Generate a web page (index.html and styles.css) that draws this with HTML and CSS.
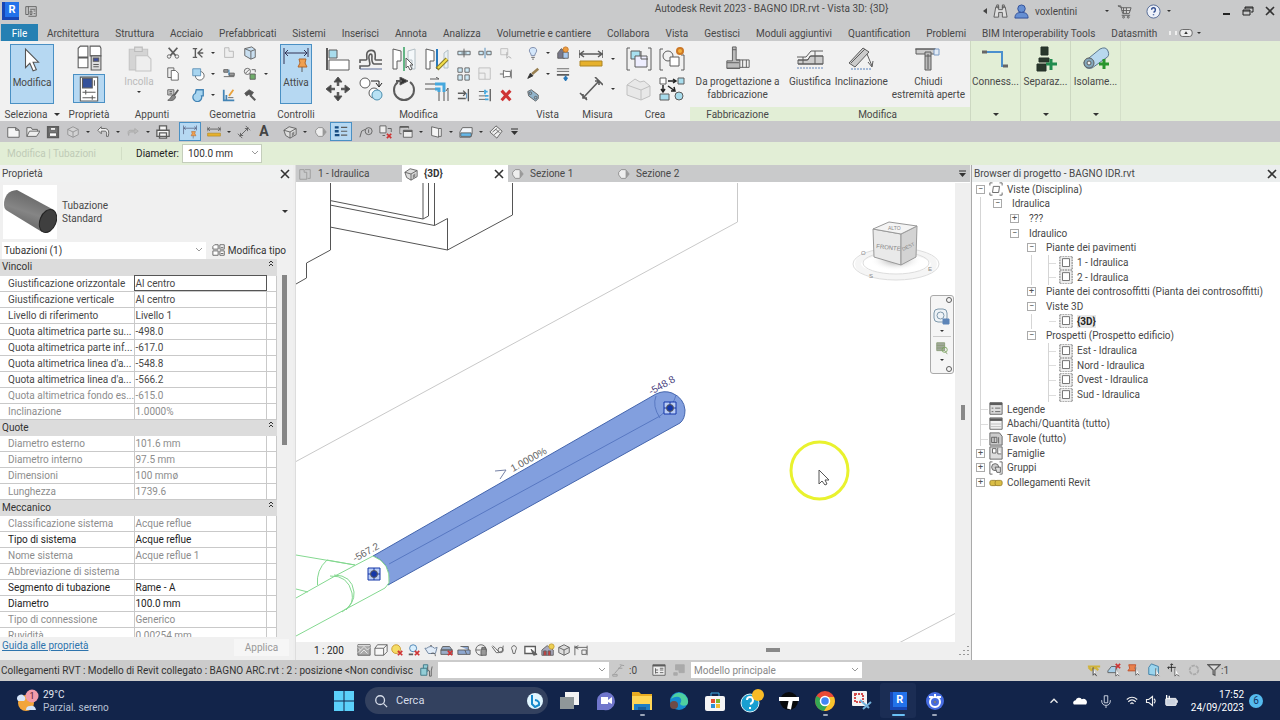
FILE: index.html
```
<!DOCTYPE html>
<html lang="it">
<head>
<meta charset="utf-8">
<title>Autodesk Revit 2023 - BAGNO IDR.rvt</title>
<link rel="stylesheet" href="styles.css">
</head>
<body>
<svg class="sprite" aria-hidden="true">
  <symbol id="home" viewBox="0 0 16 16"><path d="M2 3h12v11H5M2 3v9h3V3M7 6h6M7 8v4h2V8zM11 8h2M11 11h2"/></symbol>
  <symbol id="arrow" viewBox="0 0 16 24"><path d="M2 2v17l4-4 3 7 3-1-3-7h5z" fill="#fff" stroke="#555"/></symbol>
  <symbol id="types" viewBox="0 0 24 24"><path d="M4 1h7v10H2V3zM13 1h9l1 2v7H13zM2 12h9v9H2z" fill="#fff"/><path d="M14 10h9v13h-9z" fill="#ddd"/><path d="M16 12h5v3h-5z" fill="#3f4fa0"/><path d="M16 18h5M16 20h5"/></symbol>
  <symbol id="props" viewBox="0 0 24 24"><path d="M4 1h16v22H4z" fill="#fff"/><path d="M6 2h9v9H6z" fill="#34519b"/><path d="M6 15h12M9 13v4M6 20h12M15 18v4M17 4v5"/></symbol>
  <symbol id="paste" viewBox="0 0 24 24"><path d="M3 3h17v19H3z" fill="#d4d4d4" stroke="#c4c4c4"/><path d="M8 1h7v4H8z" fill="#ddd" stroke="#bbb"/><path d="M9 9h11l3 3v11H9z" fill="#eee" stroke="#c4c4c4"/></symbol>
  <symbol id="cut" viewBox="0 0 16 16"><path d="M3 2l8 9M13 2l-8 9" stroke-width="2"/><circle cx="3.500" cy="12" r="2"/><circle cx="12.500" cy="12" r="2"/></symbol>
  <symbol id="copy" viewBox="0 0 16 16"><path d="M2 1h7v11H2z" fill="#eee"/><path d="M6 4h5l3 3v8H6z" fill="#fff"/></symbol>
  <symbol id="match" viewBox="0 0 16 16"><path d="M2 2h7v6H2z" fill="#ccc"/><path d="M4 4h3M4 6h3" /><path d="M14 2 9 9" stroke-width="2"/><path d="M9 8c-4 0-3 5-7 6 5 1 8 0 9-4z" fill="#888"/></symbol>
  <symbol id="cope" viewBox="0 0 16 16"><path d="M2 3h5M2 13h5M5 3v10M13 3 8 8l5 5M8 8h6" stroke-width="1.600"/></symbol>
  <symbol id="join" viewBox="0 0 16 16"><circle cx="10" cy="10" r="5" fill="#fff"/><path d="M2 2h9v8H2z" fill="#a8d5f0" stroke="#5a8fb5"/></symbol>
  <symbol id="union" viewBox="0 0 16 16"><path d="M6 2h8v7h-2a5 5 0 1 1-7-3z" fill="#a8d5f0" stroke="#4384b5" stroke-width="1.500"/></symbol>
  <symbol id="wall" viewBox="0 0 16 16"><path d="M3 2h5v4h5v7H3z" fill="#eee" stroke="#b5b5b5"/></symbol>
  <symbol id="cube" viewBox="0 0 16 16"><path d="M2 3l8-2 4 3v9l-5 2-7-4z" fill="#c9dff0"/><path d="M2 3l7 3v9M9 6l5-2"/></symbol>
  <symbol id="split" viewBox="0 0 16 16"><path d="M2 3h5v3H2zM8 7h6v3H8zM2 11h12" fill="#999"/><path d="M8 3v6" stroke="#2a80c0"/></symbol>
  <symbol id="demol" viewBox="0 0 16 16"><circle cx="5" cy="5" r="3.500"/><path d="M8 8h6v6H8z" fill="#6fae6a"/><path d="M10 3h4v3M3 7l4-4"/></symbol>
  <symbol id="edit" viewBox="0 0 16 16"><path d="M2 2v12h12M5 14V8" stroke="#4384b5" stroke-width="2"/><path d="M8 9l5-7" stroke="#e9a23b" stroke-width="2"/><path d="M7 11h6"/></symbol>
  <symbol id="hammer" viewBox="0 0 16 16"><path d="M2 6l5-4 5 3-3 4-2-2-3 2z" fill="#555"/><path d="M8 8l6 6" stroke-width="2.500"/></symbol>
  <symbol id="activedim" viewBox="0 0 26 26"><path d="M1 1v16M25 1v9M2 6h22M5 3 2 6l3 3M21 3l3 3-3 3" stroke="#335"/><path d="M16 12h7l-1 4 2 4h-9l2-4z" fill="#f0a050" stroke="#b0672d"/><path d="M19 20v5"/></symbol>
  <symbol id="align" viewBox="0 0 24 24"><path d="M1 1v22" stroke-width="2"/><path d="M3 3h8v8H3z" fill="#a8dcec"/><path d="M3 13h20v10H3z" fill="#fff"/></symbol>
  <symbol id="offset" viewBox="0 0 24 24"><path d="M1 16v-3h6c2 0 0-4 1-7s7-4 8 0-1 7 1 7h6M1 22v-3h8c4 0 0-7 1-10s3-2 3 0-1 7 2 8h8" stroke-width="1.600"/><path d="M1 22h22" stroke="#5b6d9a"/></symbol>
  <symbol id="mirror" viewBox="0 0 24 24"><path d="M1 2v20h4v-8h4V4z" fill="#fff"/><path d="M23 2v20h-3v-9h-4V4z" fill="#f4f8fa" stroke="#b4c0c6"/><path d="M12 0v24" stroke="#35a060" stroke-width="1.500"/><path d="M14 11v10l2-2 2 4 2-1-2-4h3z" fill="#fff"/></symbol>
  <symbol id="mirrordraw" viewBox="0 0 24 24"><path d="M1 2v20h4v-8h4V4z" fill="#fff"/><path d="M23 3v18h-4V6z" fill="#e8f0f4" stroke="#b4c0c6"/><path d="M12 2v20" stroke="#2779bd" stroke-width="2"/><path d="M12 22 22 12" stroke="#8a7d29" stroke-width="4"/><path d="m13 21 9-9" stroke="#f4df4a" stroke-width="2"/></symbol>
  <symbol id="move" viewBox="0 0 24 24"><path d="M12 2v7M12 15v7M2 12h7M15 12h7" stroke-width="2.500"/><path d="m12 0 4 5H8zM12 24l4-5H8zM0 12l5-4v8zM24 12l-5-4v8z" fill="#444"/></symbol>
  <symbol id="copy2" viewBox="0 0 24 24"><circle cx="6" cy="6" r="5" fill="#fff"/><path d="M12 4h8v5M17 6l3 4 3-4" stroke="#222"/><circle cx="15" cy="16" r="5" fill="#fff"/><circle cx="18" cy="18" r="5" fill="#b8e2f4" stroke="#4b8eae"/></symbol>
  <symbol id="rotate" viewBox="0 0 24 24"><path d="M6 5a10 10 0 1 0 12 0" stroke-width="2"/><path d="M8 0v8l8-4z" fill="#333"/><path d="M4 4h6" stroke-width="2"/></symbol>
  <symbol id="trim" viewBox="0 0 24 24"><path d="M0 7h12M0 12h12M14 14v10M19 14v10" stroke="#555"/><path d="M10 7h9v8M10 12h4v3" stroke="#45a8de" stroke-width="3"/><path d="M5 2h9l-3-2M23 24V11l-2 3"/></symbol>
  <symbol id="splitel" viewBox="0 0 16 16"><path d="M1 6h14v4H1z" fill="#cde9f6"/><path d="M8 3v10M5 8h6"/></symbol>
  <symbol id="splitgap" viewBox="0 0 16 16"><path d="M1 6h5v4H1zM10 6h5v4h-5z" fill="#cde9f6"/><path d="M8 2v12" stroke="#4384b5"/></symbol>
  <symbol id="unpin" viewBox="0 0 16 16"><path d="M2 3h8v7H2z" stroke="#bbb" fill="#eee"/><path d="M9 7v7l2-2 3 2" stroke="#aaa"/></symbol>
  <symbol id="array" viewBox="0 0 16 16"><path d="M1 1h5v5H1zM9 1h5v5H9zM1 9h5v6H1zM9 9h5v6H9z" fill="#cde9f6"/></symbol>
  <symbol id="scale" viewBox="0 0 16 16"><path d="M1 1h13v13H1zM1 7h7v7" stroke="#bbb" fill="#eee"/></symbol>
  <symbol id="pin" viewBox="0 0 16 16"><path d="M1 8h4M5 4v8l3-1h5V5H8zM14 3v10" fill="#fff"/></symbol>
  <symbol id="trim1" viewBox="0 0 16 16"><path d="M1 6h9M7 3l3 3-3 3M1 12h9M13 1v14" stroke-width="1.500"/><path d="M11 6v6" stroke="#4384b5"/></symbol>
  <symbol id="trimm" viewBox="0 0 16 16"><path d="M1 4h6M1 9h8M1 13h8"/><path d="M7 4h4M8 9h4M8 13h4M8 2v5" stroke="#45a8de" stroke-width="2"/><path d="M14 1v14" stroke-width="1.500"/></symbol>
  <symbol id="del" viewBox="0 0 16 16"><path d="m3 3 10 11M13 3 3 14" stroke="#cf3434" stroke-width="3.500"/></symbol>
  <symbol id="bulb" viewBox="0 0 16 16"><path d="M6 11C6 8 3 7 4 4s7-3 8 0-2 4-2 7z" fill="#d3e6fa" stroke="#7583a5"/><path d="M6 13h4M7 15h2"/></symbol>
  <symbol id="house" viewBox="0 0 16 16"><path d="M2 8l4-5 4 3v8H2z" fill="#778"/><path d="M8 7h6v7H8z" fill="#a9c9ee"/><circle cx="11" cy="4" r="3" fill="#ed9c3d" stroke="#c37625"/></symbol>
  <symbol id="brush" viewBox="0 0 16 16"><path d="M14 2 7 8" stroke-width="3" stroke="#987f50"/><path d="M2 13l3-6 3 3z" fill="#333" stroke="#333"/></symbol>
  <symbol id="thin" viewBox="0 0 16 16"><path d="M1 2h14M1 5h14"/><path d="M1 9h14" stroke-width="2"/><path d="M11 10v5M9 12l2 3 2-3" stroke="#2576b8" stroke-width="2"/></symbol>
  <symbol id="link" viewBox="0 0 16 16"><path d="M2 4l4-2 8 6v4l-3 3-8-6z" fill="#92b5cc"/><circle cx="5" cy="6" r="1.500"/><circle cx="11" cy="11" r="1.500"/></symbol>
  <symbol id="measure" viewBox="0 0 24 24"><path d="M1 7h22M5 4 1 7l4 3M19 4l4 3-4 3M0 3v8M24 3v8" stroke-width="1.500"/><path d="M1 14h22v5H1z" fill="#e6b12c" stroke="#ad8524"/></symbol>
  <symbol id="dim" viewBox="0 0 24 24"><path d="M4 21 20 4M1 16l7 7M16 0l8 8M4 17v4h4M16 4h4v4" stroke-width="1.600"/></symbol>
  <symbol id="assem" viewBox="0 0 26 24"><path d="M4 1H1v22h3M22 1h3v22h-3"/><path d="M5 4h9v8H5z" fill="#a8e0f0"/><path d="M9 9h12v11H9z" fill="#eef"/><path d="M15 4v8h7"/></symbol>
  <symbol id="group" viewBox="0 0 26 24"><path d="M4 2H1v21h3M22 8h3v15h-3"/><circle cx="9" cy="9" r="5"/><path d="M11 10h9v9h-9z" fill="#fff"/><circle cx="21" cy="4" r="3" fill="#f3b13c" stroke="#cd7826" stroke-width="2"/></symbol>
  <symbol id="solid" viewBox="0 0 26 24"><path d="M1 8l8-6 5 3 4-1 6 5v10l-9 4-14-5z" fill="#e8e8e8" stroke="#c0c0c0"/><path d="M1 8l14 5 9-4M15 13v10" stroke="#c0c0c0"/></symbol>
  <symbol id="create" viewBox="0 0 26 24"><path d="M1 1h6v6H1z" fill="#fff"/><path d="M19 1h6v6h-6zM1 17h9v6H1z" fill="#a8dcec"/><circle cx="20" cy="19" r="4" fill="#a8dcec"/><path d="M9 4h8M14 2l3 2-3 2M4 8v7M2 12l2 3 2-3M9 9l7 5M15 10l1 4h-4" stroke="#222" stroke-width="1.500"/></symbol>
  <symbol id="fab" viewBox="0 0 28 28"><path d="M8 1h4v14h4v9H2v-8h6z" fill="#bbb"/><path d="M12 15h14v8H16M2 18h13M19 15v8M23 15v8M8 4h4M2 24h14"/></symbol>
  <symbol id="just" viewBox="0 0 28 26"><path d="M14 10h13v8H2v-4h10z" fill="#ccc"/><path d="M1 11h9l5-6h12M2 14h9l4-4h12M2 18h25M7 11v7M19 5v13"/><path d="M1 22h26" stroke="#6688bb" stroke-dasharray="2 1"/></symbol>
  <symbol id="incl" viewBox="0 0 28 26"><path d="M2 17 16 2l6 4L8 21z" fill="#ccc"/><path d="M4 17 18 3M20 8l5 12M21 16l4 5 1-6"/><path d="M4 23h21" stroke="#5b83bd" stroke-dasharray="2 1"/></symbol>
  <symbol id="cap" viewBox="0 0 28 26"><path d="M2 3h20v5H2z" fill="#ccc"/><path d="M11 6h6v18h-6z" fill="#bbb"/><path d="M20 3h5v6h-5z" fill="#e2ebf6" stroke="#7d9cc5"/><path d="M1 3h20M11 10h6M14 8v15"/></symbol>
  <symbol id="conn" viewBox="0 0 28 26"><path d="M1 6h20v14h6" stroke="#4a8fce" stroke-width="2"/><path d="M1 6h5M22 20h5" stroke="#666" stroke-width="3"/></symbol>
  <symbol id="sep" viewBox="0 0 24 26"><path d="M7 1h7v8H7zM5 12h10v4H5zM3 18h9v7H3z" fill="#29382c" stroke="#253028"/><path d="M12 18h11M17 13v11" stroke="#218c4f" stroke-width="3"/></symbol>
  <symbol id="isol" viewBox="0 0 28 26"><path d="M2 16 18 3q6-3 8 2t-2 7L10 22q-8 2-8-6z" fill="#b8d8ee" stroke="#5d7890"/><circle cx="7" cy="17" r="5" fill="#83a8bd"/><circle cx="7" cy="17" r="2" fill="#eee"/><path d="M17 18h10M22 13v10" stroke="#29952e" stroke-width="3"/></symbol>
  <symbol id="new" viewBox="0 0 16 16"><path d="M2 3h9l4 3v8H2zM11 3v3h4" fill="#f5f5f5"/></symbol>
  <symbol id="open" viewBox="0 0 16 16"><path d="M1 13V3h5l1 2h6v2M1 13l3-6h12l-4 6z" fill="#eee"/></symbol>
  <symbol id="save" viewBox="0 0 16 16"><path d="M2 2h12v12H2z" fill="#777" stroke-width="2"/><path d="M5 3h6v3H5zM4 9h8v4H4z" fill="#fff"/></symbol>
  <symbol id="box" viewBox="0 0 16 16"><path d="M2 5l6-3 6 3v6l-6 3-6-3z" fill="#ddd"/><path d="m2 5 6 3 6-3M8 8v6"/></symbol>
  <symbol id="undo" viewBox="0 0 16 16"><path d="M6 2 2 6l4 4V7h5q2 1 1 6h2q2-8-3-9H6z" fill="#eee"/></symbol>
  <symbol id="redo" viewBox="0 0 16 16"><path d="M10 4l4 3-4 3V8H5q-2 1-2 4-2-6 2-6h5z" fill="#bbb" stroke="#aaa"/></symbol>
  <symbol id="print" viewBox="0 0 16 16"><path d="M4 6V1h8v5M1 6h14v7H1zM4 9h8v6H4z" fill="#f5f5f5" stroke-width="1.500"/></symbol>
  <symbol id="diag" viewBox="0 0 16 16"><path d="m3 13 10-10M1 10l5 5M10 1l5 5M4 9v3h3M9 4h3v3"/></symbol>
  <symbol id="diamond" viewBox="0 0 16 16"><path d="M6 3h5l4 5-4 5H6L3 9V6z" fill="#eee" stroke="#8a8a8a"/><path d="m11 3 4 5-4 5z" fill="#999" stroke="none"/></symbol>
  <symbol id="lines" viewBox="0 0 18 18"><path d="M1 3h5M1 8h5M1 13h6" stroke="#154b80" stroke-width="3"/><path d="M9 3h8M9 8h8M9 13h8" stroke-width="1.500"/></symbol>
  <symbol id="tag" viewBox="0 0 16 16"><circle cx="11" cy="7" r="4"/><path d="M1 14l2-7 4-2M11 5v4"/></symbol>
  <symbol id="closev" viewBox="0 0 16 16"><path d="M1 1h7v8H1z" fill="#eee"/><path d="M10 4h4v4M4 12h3"/><path d="m9 10 5 5M14 10l-5 5" stroke="#cf3434" stroke-width="2"/></symbol>
  <symbol id="switch" viewBox="0 0 16 16"><path d="M5 6h10v8H5zM1 2h10v2M1 2v8h2" fill="#eee"/><path d="M1 2h10M5 7h10" stroke-width="2"/></symbol>
  <symbol id="sheet" viewBox="0 0 16 16"><path d="m3 2 8 2v10l-8-2zM11 4h3v9h-3" fill="#f5f5f5"/></symbol>
  <symbol id="section" viewBox="0 0 16 16"><path d="M1 8 4 3h11v7l-2 4H1z" fill="#f3f6fa"/><path d="M2 9h12v4H2z" fill="#65b8e9"/></symbol>
  <symbol id="tube" viewBox="0 0 16 16"><path d="m1 8 7-7 7 6-6 8zM4 8l5-4M6 11l6-5M8 5l4 4" fill="#eee"/></symbol>
  <symbol id="more" viewBox="0 0 10 10"><path d="M2 2h7" stroke="#333"/><path d="M2 4h7L5.500 8z" fill="#333" stroke="none"/></symbol>
  <symbol id="binoc" viewBox="0 0 16 16"><path d="M3 3h3v3h4V3h3l2 11h-5V9H6v5H1zM4 1h2v3H4zM10 1h2v3h-2z" fill="#ddd"/></symbol>
  <symbol id="user" viewBox="0 0 16 16"><circle cx="8" cy="5" r="4" fill="#668fd2" stroke="#304f99"/><path d="M1 15c0-5 3-6 7-6s7 1 7 6z" fill="#668fd2" stroke="#304f99"/></symbol>
  <symbol id="cart" viewBox="0 0 16 16"><path d="M1 2h3l2 8h7l2-6H5zM5 12h9M7 4v6M10 4v6M5 7h9" fill="#ddd"/><circle cx="7" cy="14" r="1"/><circle cx="12" cy="14" r="1"/></symbol>
  <symbol id="help" viewBox="0 0 16 16"><circle cx="8" cy="8" r="7" fill="#eef2fa" stroke="#536a94"/><path d="M6 6q0-2 2-2t2 2-2 3M8 11v1" stroke="#304d90" stroke-width="1.500"/></symbol>
  <symbol id="min" viewBox="0 0 12 12"><path d="M3 9h7" stroke="#222" stroke-width="2"/></symbol>
  <symbol id="restore" viewBox="0 0 12 12"><path d="M1 5h7v5H1zM3 4V2h8v5H9M3 3h8M1 6h7" stroke="#222"/></symbol>
  <symbol id="x" viewBox="0 0 12 12"><path d="m2 2 8 8M10 2l-8 8" stroke="#333" stroke-width="1.600"/></symbol>
  <symbol id="pill" viewBox="0 0 16 16"><rect x="1" y="4" width="14" height="8" rx="3" fill="#eee"/><path d="m6 9 2-3 2 3z" fill="#333" stroke="none"/></symbol>
  <symbol id="collapse" viewBox="0 0 8 8"><path d="m2 4 2-2 2 2M2 7l2-2 2 2" stroke="#333"/></symbol>
  <symbol id="mod" viewBox="0 0 16 16"><path d="M3 2h4v5H1V4zM9 2h5v5H9zM1 9h6v5H1zM9 9h5v5H9zM10 12h3M10 5h3" fill="#fff"/></symbol>
  <symbol id="plan" viewBox="0 0 16 16"><path d="M2 3h5v3h3v8H2zM8 3h6v10h-3" stroke="#999"/></symbol>
  <symbol id="ghome" viewBox="0 0 16 16"><path d="m1 6 6-4 8 2v7l-7 4-5-3z" fill="#ddd"/><path d="m1 6 7 2 7-4M8 8v7"/><path d="M10 9l3-2v4l-3 2z" fill="#888" stroke="none"/></symbol>
  <symbol id="viewset" viewBox="0 0 16 16"><path d="M5 5h7l-1 7H4zM1 4V1h3M12 1h3v3M1 12v3h3M12 15h3v-3"/></symbol>
  <symbol id="view" viewBox="0 0 16 16"><path d="M1 0h14v16H1z" stroke-dasharray="2 1" fill="#eee"/><path d="M4 3h8v9H4z" fill="#fff" stroke="#666"/></symbol>
  <symbol id="legend" viewBox="0 0 16 16"><path d="M1 1h14v13H1z" fill="#ddd"/><path d="M1 2h14" stroke-width="3"/><path d="M3 7h2M3 11h2M7 7h6M7 11h6"/></symbol>
  <symbol id="sched" viewBox="0 0 16 16"><path d="M1 1h14v13H1z" fill="#f3f3f3"/><path d="M1 3h14" stroke-width="3"/><path d="M1 8h14M1 11h14" stroke="#bbb"/></symbol>
  <symbol id="sheets" viewBox="0 0 16 16"><path d="M1 1h11l3 4v10H1z" fill="#ccc"/><path d="M3 6h6v6H3zM11 6v7M6 6v6"/></symbol>
  <symbol id="fam" viewBox="0 0 16 16"><path d="M1 1h14v14H1z" fill="#ddd"/><path d="M4 3h4v5H4zM10 2v7h4" fill="#fff"/></symbol>
  <symbol id="grp" viewBox="0 0 16 16"><path d="M4 1H1v14h3M12 1h3v14h-3"/><circle cx="7" cy="7" r="4" fill="#ccc"/><path d="M7 7h6v6H9z" fill="#ddd"/></symbol>
  <symbol id="chain" viewBox="0 0 16 16"><rect x="1" y="5" width="8" height="6" rx="2" fill="#d9bd45" stroke="#9b812b"/><rect x="7" y="5" width="8" height="6" rx="2" fill="#d9bd45" stroke="#9b812b"/></symbol>
  <symbol id="detail" viewBox="0 0 16 16"><path d="M1 2h14v12H1z" fill="#aaa"/><path d="m1 5 3 3 4-4 4 4 3-3M1 11l3-3M4 12l4-4 4 4M1 3h14" stroke="#eee"/></symbol>
  <symbol id="shade" viewBox="0 0 16 16"><path d="M1 6h10v8H1zM1 6l3-4h11v8l-4 4M11 6l4-4" fill="#f7f7f7"/></symbol>
  <symbol id="sun" viewBox="0 0 16 16"><circle cx="7" cy="7" r="5" fill="#f4dc65" stroke="#c9962d"/><path d="m9 9 5 5M14 9l-5 5" stroke="#cf3434" stroke-width="2"/></symbol>
  <symbol id="shadow" viewBox="0 0 16 16"><circle cx="7" cy="6" r="4" fill="#d9effd" stroke="#417cae"/><path d="M2 13h5" stroke-width="2"/><path d="m9 9 5 5M14 9l-5 5" stroke="#cf3434" stroke-width="2"/></symbol>
  <symbol id="teapot" viewBox="0 0 16 16"><path d="M3 6q5-4 9 0l3-1-2 7H5L1 6z" fill="#e1ecf8" stroke="#667b98"/><path d="M7 3h2M8 12q5-2 5 3"/></symbol>
  <symbol id="crop" viewBox="0 0 16 16"><path d="M1 8h13v5H1zM3 4h8l3 4H1z" fill="#99adc8"/><path d="m9 9 5 5M14 9l-5 5" stroke="#cf3434" stroke-width="2"/></symbol>
  <symbol id="crop2" viewBox="0 0 16 16"><path d="M1 8h14v5H1zM4 4h9v4" fill="#8da7d0"/><path d="M9 8l2 5"/></symbol>
  <symbol id="lock" viewBox="0 0 16 16"><circle cx="8" cy="8" r="6" fill="#eee"/><path d="M8 7h6v7H8zM9 7V5h4v2M2 8h5" fill="#999"/></symbol>
  <symbol id="glasses" viewBox="0 0 16 16"><path d="M1 4l5 7h3l4-2 1-6M2 3l3 3 4 4"/><circle cx="11" cy="8" r="3"/></symbol>
  <symbol id="pinbulb" viewBox="0 0 16 16"><path d="M8 3a3 3 0 0 1 2 5l-1 4H7L6 8a3 3 0 0 1 2-5z" fill="#eee"/></symbol>
  <symbol id="reveal" viewBox="0 0 16 16"><path d="M1 4h12v8H1z" stroke-width="1.500" fill="#fff"/><path d="M8 7l7 6-4 1z" fill="#666"/></symbol>
  <symbol id="anal" viewBox="0 0 16 16"><path d="M1 8 7 3l7 5v6H1z" fill="#a9a9bd"/><path d="M3 14V9h3v5M8 14V9h3v5" fill="#c64040"/><circle cx="12" cy="4" r="3" fill="#edcf52" stroke="#c49f32"/></symbol>
  <symbol id="constr" viewBox="0 0 16 16"><path d="M1 3v11M15 3v11M1 5h14M5 3 1 5l4 2M9 8h5v5H9z"/></symbol>
  <symbol id="share" viewBox="0 0 16 16"><path d="M2 6h7v8H2zM5 6V2h5v8" fill="#93cdd6" stroke="#397482"/><path d="M10 4v4l2 1v6h2V9l1-5" fill="#ccc"/></symbol>
  <symbol id="filteredit" viewBox="0 0 16 16"><path d="M2 13h5v2H2zM4 12 12 3M10 2l5 1M8 6h5" stroke="#999"/></symbol>
  <symbol id="opts" viewBox="0 0 16 16"><path d="M1 2h14v12H1z" fill="#eee"/><path d="M1 3h14" stroke-width="2"/><path d="M4 6v6M4 8h3M4 11h3M9 6h4M9 8h4M9 11h4"/></symbol>
  <symbol id="dopt" viewBox="0 0 16 16"><path d="M4 2h10v9H8V8H4zM2 11h4v3H2z" fill="#aaa" stroke="#aaa"/></symbol>
  <symbol id="s1" viewBox="0 0 16 16"><path d="M1 4h14M2 5l3 3 4-3 4 3" stroke="#d0b33c" stroke-width="2.500"/><path d="M7 5v9l2-2 2 3" fill="#fff" stroke="#333"/></symbol>
  <symbol id="s2" viewBox="0 0 16 16"><path d="m1 9 4-5h6v7H1z" fill="#a7d0ea"/><path d="m10 1 5 5M15 1l-5 5" stroke="#cf3434" stroke-width="2"/><path d="M10 6v9l2-2 2 2" fill="#fff"/></symbol>
  <symbol id="s3" viewBox="0 0 16 16"><path d="M2 2h8l-1 4 2 3H1l2-3z" fill="#e9824d" stroke="#bf502b"/><path d="M10 5v9l2-2 2 2" fill="#fff"/></symbol>
  <symbol id="s4" viewBox="0 0 16 16"><path d="M2 5 5 1l8 3v8l-4 2-7-1z" fill="#9bd5ee" stroke="#397ca4"/><path d="M10 6v9l2-2 2 2" fill="#fff"/></symbol>
  <symbol id="s5" viewBox="0 0 16 16"><path d="M5 1v9M1 5h9M4 2l1-1 2 1M2 4 1 5l1 2" stroke="#222"/><path d="M9 6v9l2-2 3 2" fill="#fff"/></symbol>
  <symbol id="s6" viewBox="0 0 16 16"><circle cx="8" cy="8" r="5" stroke="#aaa" stroke-width="2" stroke-dasharray="4 1"/></symbol>
  <symbol id="s7" viewBox="0 0 16 16"><path d="M1 2h14L9 8v6l-2-1V8z" fill="#ddd" stroke-width="1.500"/></symbol>
  <symbol id="win" viewBox="0 0 20 20"><path d="M0 0h9.500v9.500H0zM10.500 0H20v9.500h-9.500zM0 10.500h9.500V20H0zM10.500 10.500H20V20h-9.500z" fill="#5bd0fa" stroke="none"/></symbol>
  <symbol id="mag" viewBox="0 0 16 16"><circle cx="7" cy="7" r="5" stroke="#d8deea" stroke-width="1.500"/><path d="m11 11 4 4" stroke="#d8deea" stroke-width="1.500"/></symbol>
  <symbol id="bing" viewBox="0 0 18 18"><circle cx="9" cy="9" r="8" fill="#e1f6ff" stroke="none"/><path d="M6 3v9l3 3 4-2q1-4-4-5" stroke="#1689cc" stroke-width="2"/></symbol>
  <symbol id="task" viewBox="0 0 20 20"><path d="M6 1h14v13H6z" fill="#f3f3f3" stroke="none"/><path d="M1 6h14v12H1z" fill="#8f9799" stroke="none"/></symbol>
  <symbol id="teams" viewBox="0 0 20 20"><path d="M1 19V9a9 9 0 1 1 7 10z" fill="#7076cc" stroke="none"/><path d="M5 6h7v7H5zM12 9l4-3v7l-4-2z" fill="#fff" stroke="none"/></symbol>
  <symbol id="folder" viewBox="0 0 20 20"><path d="M0 1h7l2 2h11v16H0z" fill="#e9ac22" stroke="none"/><path d="M0 5h20v14H0z" fill="#ffd657" stroke="none"/><path d="M2 13h16v6H2z" fill="#1e7ec5" stroke="none"/><path d="M6 19v-3h8v3" fill="#175f9d" stroke="none"/></symbol>
  <symbol id="edge" viewBox="0 0 20 20"><circle cx="10" cy="10" r="9" fill="#168bd0" stroke="none"/><path d="M2 8Q7-2 16 4q5 5 2 10-5 2-7-1 3-5-1-7-4-1-8 2" fill="#4ed0a0" stroke="none"/><circle cx="5" cy="14" r="4" fill="#6f4b46" stroke="none"/></symbol>
  <symbol id="store" viewBox="0 0 20 20"><path d="M6 6V2h8v4" stroke="#39a7dd"/><rect x="0" y="5" width="20" height="15" rx="2" fill="#f5f5f5" stroke="none"/><path d="M6 8h4v4H6z" fill="#e25131" stroke="none"/><path d="M11 8h4v4h-4z" fill="#7eb72e" stroke="none"/><path d="M6 13h4v4H6z" fill="#2a91d6" stroke="none"/><path d="M11 13h4v4h-4z" fill="#f3bd2f" stroke="none"/></symbol>
  <symbol id="ask" viewBox="0 0 24 24"><circle cx="10" cy="14" r="9" fill="#199fd1" stroke="#d9f3fb"/><path d="M7 11q0-3 3-3t3 3-3 4M10 18v2" stroke="#fff" stroke-width="2"/><circle cx="18" cy="6" r="6" fill="#f9bb26" stroke="none"/></symbol>
  <symbol id="tapp" viewBox="0 0 20 20"><circle cx="10" cy="10" r="9" fill="#080a0c" stroke="none"/><path d="M0 8h20M12 8l-2 10" stroke="#fff" stroke-width="4"/></symbol>
  <symbol id="chrome" viewBox="0 0 20 20"><circle cx="10" cy="10" r="10" fill="#e84a37" stroke="none"/><path d="M10 10 1.500 5A10 10 0 0 0 9 20l5-7z" fill="#35a853" stroke="none"/><path d="M10 6h9A10 10 0 0 1 9 20l5-8z" fill="#f7c42c" stroke="none"/><circle cx="10" cy="10" r="4.500" fill="#4285f4" stroke="#fff" stroke-width="1.500"/></symbol>
  <symbol id="snip" viewBox="0 0 20 20"><rect width="15" height="15" rx="1" fill="#f4f4f4" stroke="none"/><path d="M3 3h8v8H3z" stroke="#d44b4b" stroke-width="2" stroke-dasharray="2 1"/><path d="m8 9 9 8M11 18l8-7" stroke="#74b2dc" stroke-width="2"/></symbol>
  <symbol id="round" viewBox="0 0 20 20"><circle cx="10" cy="10" r="9" fill="#466ce1" stroke="none"/><circle cx="10" cy="11" r="5" stroke="#fff" stroke-width="2"/><path d="M4 6h4M12 6h4M10 3v3" stroke="#fff" stroke-width="2"/><circle cx="10" cy="11" r="1" fill="#fff"/></symbol>
  <symbol id="up" viewBox="0 0 16 16"><path d="m4 10 4-4 4 4" stroke="#eee" stroke-width="1.500"/></symbol>
  <symbol id="cloud" viewBox="0 0 16 16"><path d="M1 12a3 3 0 0 1 2-5 4 4 0 0 1 7-1 4 4 0 0 1 5 6z" fill="#fff" stroke="none"/></symbol>
  <symbol id="mic" viewBox="0 0 16 16"><path d="M6 2h4v8H6zM3 7q0 6 5 6t5-6M8 13v3" stroke="#dce2ee"/></symbol>
  <symbol id="wifi" viewBox="0 0 16 16"><path d="M1 6q7-6 14 0M3 9q5-5 10 0M6 12q2-3 4 0" stroke="#eee" stroke-width="1.500"/></symbol>
  <symbol id="vol" viewBox="0 0 16 16"><path d="M2 6h3l5-4v12l-5-4H2zM12 5q3 3 0 6" stroke="#eee" stroke-width="1.500"/></symbol>
  <symbol id="bat" viewBox="0 0 16 16"><rect x="2" y="5" width="12" height="8" rx="1" fill="#ccd3df" stroke="#fff"/><path d="M3 1v5M6 2v4M15 7v3" stroke="#fff" stroke-width="1.500"/></symbol>
</svg>

<header class="titlebar">
  <div class="title-left"><span class="logo">R</span><button class="ib"><svg class="i14"><use href="#home"/></svg></button></div>
  <h1 class="title">Autodesk Revit 2023 - BAGNO IDR.rvt - Vista 3D: {3D}</h1>
  <div class="title-right">
    <i class="tri-left"></i><svg class="i16"><use href="#binoc"/></svg><svg class="i16"><use href="#user"/></svg><span class="user-name">voxlentini</span><i class="tri"></i><svg class="i16"><use href="#cart"/></svg><svg class="i16 help"><use href="#help"/></svg><i class="tri"></i>
    <span class="window-buttons"><button class="ib" aria-label="Riduci"><svg class="i12"><use href="#min"/></svg></button><button class="ib" aria-label="Ripristina"><svg class="i12"><use href="#restore"/></svg></button><button class="ib" aria-label="Chiudi"><svg class="i12"><use href="#x"/></svg></button></span>
  </div>
</header>

<nav class="tabs">
  <button class="file">File</button><button>Architettura</button><button>Struttura</button><button>Acciaio</button><button>Prefabbricati</button><button>Sistemi</button><button>Inserisci</button><button>Annota</button><button>Analizza</button><button>Volumetrie e cantiere</button><button>Collabora</button><button>Vista</button><button>Gestisci</button><button>Moduli aggiuntivi</button><button>Quantification</button><button>Problemi</button><button>BIM Interoperability Tools</button><button>Datasmith</button>
  <span class="tab-dots"></span><svg class="i14"><use href="#pill"/></svg><i class="tri"></i>
</nav>

<section class="ribbon">
  <div class="panel p-select"><div class="body"><button class="big on"><svg class="cursor"><use href="#arrow"/></svg><span>Modifica</span></button></div><div class="label">Seleziona <i class="tri wide"></i></div></div>
  <div class="panel p-props"><div class="body stack"><button class="ib"><svg class="i26"><use href="#types"/></svg></button><button class="ib onbox"><svg class="i26"><use href="#props"/></svg></button></div><div class="label">Proprietà</div></div>
  <div class="panel p-clip"><div class="body"><button class="big off" disabled><svg class="i26"><use href="#paste"/></svg><span>Incolla</span><i class="tri"></i></button>
    <div class="grid g1"><svg><use href="#cut"/></svg><svg><use href="#copy"/></svg><svg><use href="#match"/></svg></div></div><div class="label">Appunti</div></div>
  <div class="panel p-geo"><div class="body"><div class="grid g5">
    <svg><use href="#cope"/></svg><i class="tri"></i><svg><use href="#wall"/></svg><svg><use href="#cube"/></svg><span></span>
    <svg><use href="#join"/></svg><i class="tri"></i><svg><use href="#split"/></svg><svg><use href="#demol"/></svg><i class="tri"></i>
    <svg><use href="#union"/></svg><i class="tri"></i><svg><use href="#edit"/></svg><svg><use href="#hammer"/></svg><span></span></div></div><div class="label">Geometria</div></div>
  <div class="panel p-ctrl"><div class="body"><button class="big on"><svg class="i26"><use href="#activedim"/></svg><span>Attiva</span></button></div><div class="label">Controlli</div></div>
  <div class="panel p-mod"><div class="body"><div class="lgrid l4">
    <svg><use href="#align"/></svg><svg><use href="#offset"/></svg><svg><use href="#mirror"/></svg><svg><use href="#mirrordraw"/></svg>
    <svg><use href="#move"/></svg><svg><use href="#copy2"/></svg><svg><use href="#rotate"/></svg><svg><use href="#trim"/></svg></div>
    <div class="grid g3"><svg><use href="#splitel"/></svg><svg><use href="#splitgap"/></svg><svg><use href="#unpin"/></svg><svg><use href="#array"/></svg><svg><use href="#scale"/></svg><svg><use href="#pin"/></svg><svg><use href="#trim1"/></svg><svg><use href="#trimm"/></svg><svg><use href="#del"/></svg></div></div><div class="label">Modifica</div></div>
  <div class="panel p-view"><div class="body"><div class="grid gv"><svg><use href="#bulb"/></svg><i class="tri"></i><svg><use href="#house"/></svg><svg><use href="#brush"/></svg><i class="tri"></i><svg><use href="#thin"/></svg><svg><use href="#link"/></svg></div></div><div class="label">Vista</div></div>
  <div class="panel p-meas"><div class="body"><div class="lgrid lm"><svg><use href="#measure"/></svg><i class="tri"></i><svg><use href="#dim"/></svg><i class="tri"></i></div></div><div class="label">Misura</div></div>
  <div class="panel p-crea"><div class="body"><div class="lgrid l2"><svg><use href="#assem"/></svg><svg><use href="#group"/></svg><svg><use href="#solid"/></svg><svg><use href="#create"/></svg></div></div><div class="label">Crea</div></div>
  <div class="panel p-fab ctx"><div class="body"><button class="big"><svg class="i28"><use href="#fab"/></svg><span>Da progettazione a<br>fabbricazione</span></button></div><div class="label">Fabbricazione</div></div>
  <div class="panel p-mod2 ctx"><div class="body"><button class="big"><svg class="i28"><use href="#just"/></svg><span>Giustifica</span></button><button class="big"><svg class="i28"><use href="#incl"/></svg><span>Inclinazione</span></button><button class="big"><svg class="i28"><use href="#cap"/></svg><span>Chiudi<br>estremità aperte</span></button></div><div class="label">Modifica</div></div>
  <div class="panel ctx2"><div class="body"><button class="big"><svg class="i28"><use href="#conn"/></svg><span>Conness...</span></button></div><div class="label"><i class="tri wide"></i></div></div>
  <div class="panel ctx2"><div class="body"><button class="big"><svg class="i28"><use href="#sep"/></svg><span>Separaz...</span></button></div><div class="label"><i class="tri wide"></i></div></div>
  <div class="panel ctx2"><div class="body"><button class="big"><svg class="i28"><use href="#isol"/></svg><span>Isolame...</span></button></div><div class="label"><i class="tri wide"></i></div></div>
  <div class="ribbon-rest"></div>
</section>

<section class="qat">
  <svg><use href="#new"/></svg><svg><use href="#open"/></svg><svg><use href="#save"/></svg><svg class="dim"><use href="#box"/></svg><i class="tri"></i><svg><use href="#undo"/></svg><i class="tri"></i><svg><use href="#redo"/></svg><i class="tri"></i><svg><use href="#print"/></svg>
  <span class="sel first"><svg><use href="#activedim"/></svg></span><svg><use href="#measure"/></svg><i class="tri"></i><svg><use href="#diag"/></svg><b class="letter">A</b>
  <svg class="skip"><use href="#ghome"/></svg><i class="tri"></i><svg><use href="#diamond"/></svg><span class="sel"><svg><use href="#lines"/></svg></span><svg class="after"><use href="#tag"/></svg><svg><use href="#closev"/></svg><svg><use href="#switch"/></svg><i class="tri"></i><svg><use href="#sheet"/></svg><i class="tri"></i><svg><use href="#section"/></svg><i class="tri"></i><svg><use href="#tube"/></svg><svg class="more"><use href="#more"/></svg>
</section>

<section class="options">
  <span class="mode">Modifica | Tubazioni</span>
  <label for="diam">Diameter:</label><select id="diam"><option>100.0 mm</option></select>
</section>

<main class="work">
  <aside class="props">
    <header class="dock-head"><span>Proprietà</span><button class="ib" aria-label="Chiudi"><svg class="i12"><use href="#x"/></svg></button></header>
    <div class="type">
      <svg class="thumb" viewBox="0 0 54 54"><defs><linearGradient id="tb" x1="0.200" y1="1" x2="0.600" y2="0"><stop offset="0" stop-color="#5a5a5a"/><stop offset="0.500" stop-color="#858585"/><stop offset="1" stop-color="#626262"/></linearGradient></defs><path d="M1 20Q1 6 14 5L51 25 39 47 3 25Q1 23 1 20Z" fill="url(#tb)"/><ellipse cx="45" cy="36" rx="8" ry="12" transform="rotate(22 45 36)" fill="#3f3f3f" stroke="#222"/></svg>
      <div class="type-name">Tubazione<br>Standard</div><i class="tri wide"></i>
    </div>
    <div class="filter"><select aria-label="Categoria"><option>Tubazioni (1)</option></select><button class="edit-type"><svg class="i14"><use href="#mod"/></svg>Modifica tipo</button></div>
    <div class="scroll">
      <table>
        <colgroup><col class="c1"><col><col class="c3"></colgroup>
        <tbody>
        <tr class="sec"><th colspan="2">Vincoli</th><td><svg class="i8"><use href="#collapse"/></svg></td></tr>
        <tr><th>Giustificazione orizzontale</th><td class="edit">Al centro</td><td></td></tr>
        <tr><th>Giustificazione verticale</th><td>Al centro</td><td></td></tr>
        <tr><th>Livello di riferimento</th><td>Livello 1</td><td></td></tr>
        <tr><th>Quota altimetrica parte su...</th><td>-498.0</td><td></td></tr>
        <tr><th>Quota altimetrica parte inf...</th><td>-617.0</td><td></td></tr>
        <tr><th>Quota altimetrica linea d'a...</th><td>-548.8</td><td></td></tr>
        <tr><th>Quota altimetrica linea d'a...</th><td>-566.2</td><td></td></tr>
        <tr class="ro"><th>Quota altimetrica fondo es...</th><td>-615.0</td><td></td></tr>
        <tr class="ro"><th>Inclinazione</th><td>1.0000%</td><td></td></tr>
        <tr class="sec"><th colspan="2">Quote</th><td><svg class="i8"><use href="#collapse"/></svg></td></tr>
        <tr class="ro"><th>Diametro esterno</th><td>101.6 mm</td><td></td></tr>
        <tr class="ro"><th>Diametro interno</th><td>97.5 mm</td><td></td></tr>
        <tr class="ro"><th>Dimensioni</th><td>100 mmø</td><td></td></tr>
        <tr class="ro"><th>Lunghezza</th><td>1739.6</td><td></td></tr>
        <tr class="sec"><th colspan="2">Meccanico</th><td><svg class="i8"><use href="#collapse"/></svg></td></tr>
        <tr class="ro"><th>Classificazione sistema</th><td>Acque reflue</td><td></td></tr>
        <tr class="hi"><th>Tipo di sistema</th><td>Acque reflue</td><td></td></tr>
        <tr class="ro"><th>Nome sistema</th><td>Acque reflue 1</td><td></td></tr>
        <tr class="ro"><th>Abbreviazione di sistema</th><td></td><td></td></tr>
        <tr class="hi"><th>Segmento di tubazione</th><td>Rame - A</td><td></td></tr>
        <tr class="hi"><th>Diametro</th><td>100.0 mm</td><td></td></tr>
        <tr class="ro"><th>Tipo di connessione</th><td>Generico</td><td></td></tr>
        <tr class="ro"><th>Ruvidità</th><td>0.00254 mm</td><td></td></tr>
        </tbody>
      </table>
      <div class="track"><div class="thumb-v"></div></div>
    </div>
    <footer class="props-foot"><a href="#guida">Guida alle proprietà</a><button disabled>Applica</button></footer>
  </aside>

  <section class="center">
    <div class="doc-tabs">
      <button class="doc"><svg class="i14"><use href="#plan"/></svg><span>1 - Idraulica</span></button>
      <button class="doc active"><svg class="i14"><use href="#ghome"/></svg><span>{3D}</span><svg class="i12"><use href="#x"/></svg></button>
      <button class="doc"><svg class="i14"><use href="#diamond"/></svg><span>Sezione 1</span></button>
      <button class="doc"><svg class="i14"><use href="#diamond"/></svg><span>Sezione 2</span></button>
      <svg class="more"><use href="#more"/></svg>
    </div>
    <div class="view-row">
      <div class="canvas">
        <svg class="drawing" viewBox="296 182 659 460" preserveAspectRatio="xMinYMin slice">
          <defs>
            <radialGradient id="sh"><stop offset="0" stop-color="#999"/><stop offset="1" stop-color="#fff" stop-opacity="0"/></radialGradient>
            <g id="node"><path d="M-6-6H6V6H-6z" fill="#b9cdf6" stroke="#1437a8"/><path d="M-6 0H6M0-6V6" stroke="#1437a8"/><circle r="3.500" fill="#1437a8"/></g>
          </defs>
          <g class="ink"><path d="M330.500 182v67L306.500 262v15L296 283M330 199.500 423 218V182M428.500 182v33L423 218M330 204l104.500 20.500V182M434.500 224.500l13-7V249M330 226l117.500 23 65-35V182"/></g>
          <path class="faint" d="M737.500 182v39L296 460.500M897 643l59-31"/>
          <path class="pipe" d="M373 555 656 393Q664 389 672 392 684 397 685 409 685 418 680 422L388 584Q392 562 373 555Z"/>
          <path class="pipe-line" d="M389 563 660 415M656 395Q652 405 660 417M660 415Q674 404 676 394"/>
          <path class="fitting-fill" d="M296 597 352 565 373 555Q391 562 389 582L342 611 296 635Z"/>
          <path class="fitting" d="M296 554 355 564M327 559Q316 569 317.500 584M327 559 355 564M296 597 335 575 352 566 373 555M296 588 308 591M330 575Q348 574 352 592 354 602 346 609M334 574Q352 574 354 591 355 603 342 611M296 635 385 587 389 582Q391 562 373 555"/>
          <use href="#node" x="670" y="407"/><use href="#node" x="374" y="573"/>
          <g class="dims"><text transform="translate(651 394) rotate(-29)" class="deep">-548.8</text><text transform="translate(513 471) rotate(-29)">1.0000%</text><text transform="translate(355 561) rotate(-29)">-567.2</text><path d="M495 470 506 469 500 478"/></g>
          <g class="vcube"><ellipse cx="896" cy="263" rx="38" ry="13" class="ring"/><ellipse cx="896" cy="263" rx="43" ry="16"/><ellipse cx="896" cy="262" rx="33" ry="11"/>
            <ellipse cx="896" cy="259" rx="26" ry="11" fill="url(#sh)" stroke="none"/>
            <path d="M873 228 901 233V264L874 256Z" fill="#e9e9e9" class="edge"/><path d="M901 233 917 225 916 256 901 264Z" fill="#d3d3d3" class="edge"/><path d="M873 228 889 221 917 225 901 233Z" fill="#f4f4f4" class="edge"/>
            <text transform="translate(876 247) rotate(7)">FRONTE</text><text transform="translate(903 250) rotate(-26)" class="tiny">DEST</text><text x="888" y="229" class="tiny">ALTO</text>
            <text x="861" y="254">O</text><text x="869" y="277">S</text><text x="928" y="270">E</text></g>
          <circle cx="819.500" cy="469.500" r="28.500" class="halo"/>
          <path d="M819 469v14l3-3 3 4 2-1-2-4h4z" fill="#fff" stroke="#555"/>
        </svg>
        <div class="navbar"><svg class="i8"><circle cx="4" cy="4" r="2.500"/></svg><button class="ib" aria-label="Ruota"><svg class="i18" viewBox="0 0 18 18"><rect x="1" y="1" width="13" height="13" rx="4" stroke="#7e98ab" fill="#eef3f7"/><circle cx="7.500" cy="7.500" r="3.500" stroke="#7e98ab"/><path d="M10 11h6v5h-6z" fill="#5d85b8" stroke="#5d85b8"/></svg></button><i class="tri"></i><hr><button class="ib" aria-label="Zoom"><svg class="i14" viewBox="0 0 16 16"><path d="M2 2h9v9H2z" fill="#a2a99c" stroke="#8a9b77"/><path d="M11 11l3 4M2 5h9M2 8h9" stroke="#8a9b77"/><circle cx="11" cy="10" r="3" stroke="#7aa65d"/></svg></button><i class="tri"></i><svg class="i8"><circle cx="4" cy="4" r="2.500"/></svg></div>
      </div>
      <div class="vscroll"></div>
    </div>
    <div class="view-bar"><button class="scale">1 : 200</button>
      <div class="vicons"><svg><use href="#detail"/></svg><svg><use href="#shade"/></svg><svg><use href="#sun"/></svg><svg><use href="#shadow"/></svg><svg><use href="#teapot"/></svg><svg><use href="#crop"/></svg><svg><use href="#crop2"/></svg><svg><use href="#lock"/></svg><svg><use href="#glasses"/></svg><svg><use href="#pinbulb"/></svg><svg><use href="#reveal"/></svg><svg><use href="#anal"/></svg><svg><use href="#box"/></svg><svg><use href="#constr"/></svg></div>
      <div class="hscroll"><span></span></div><svg class="i12" viewBox="0 0 12 12"><path d="M10 2v1M10 6v1M10 10v1M6 6v1M6 10v1M2 10v1" stroke="#999" stroke-width="2"/></svg></div>
  </section>

  <aside class="browser">
    <header class="dock-head"><span>Browser di progetto - BAGNO IDR.rvt</span><button class="ib" aria-label="Chiudi"><svg class="i12"><use href="#x"/></svg></button></header>
    <ul class="tree">
      <li><i class="c t">−</i><svg><use href="#viewset"/></svg>Viste (Disciplina)</li>
      <li class="n"><i class="c v"></i><i class="c t">−</i>Idraulica</li>
      <li class="n"><i class="c v"></i><i class="c"></i><i class="c t">+</i>???</li>
      <li class="n"><i class="c v"></i><i class="c"></i><i class="c t">−</i>Idraulico</li>
      <li class="n"><i class="c v"></i><i class="c"></i><i class="c"></i><i class="c t">−</i>Piante dei pavimenti</li>
      <li class="f"><i class="c v"></i><i class="c"></i><i class="c"></i><i class="c v"></i><i class="c v h"></i><svg><use href="#view"/></svg>1 - Idraulica</li>
      <li class="f"><i class="c v"></i><i class="c"></i><i class="c"></i><i class="c v"></i><i class="c v h"></i><svg><use href="#view"/></svg>2 - Idraulica</li>
      <li class="n"><i class="c v"></i><i class="c"></i><i class="c"></i><i class="c t">+</i>Piante dei controsoffitti (Pianta dei controsoffitti)</li>
      <li class="n"><i class="c v"></i><i class="c"></i><i class="c"></i><i class="c t">−</i>Viste 3D</li>
      <li class="f"><i class="c v"></i><i class="c"></i><i class="c"></i><i class="c v"></i><i class="c h"></i><svg><use href="#view"/></svg><b>{3D}</b></li>
      <li class="n"><i class="c v"></i><i class="c"></i><i class="c"></i><i class="c t">−</i>Prospetti (Prospetto edificio)</li>
      <li class="f"><i class="c v"></i><i class="c"></i><i class="c"></i><i class="c"></i><i class="c v h"></i><svg><use href="#view"/></svg>Est - Idraulica</li>
      <li class="f"><i class="c v"></i><i class="c"></i><i class="c"></i><i class="c"></i><i class="c v h"></i><svg><use href="#view"/></svg>Nord - Idraulica</li>
      <li class="f"><i class="c v"></i><i class="c"></i><i class="c"></i><i class="c"></i><i class="c v h"></i><svg><use href="#view"/></svg>Ovest - Idraulica</li>
      <li class="f"><i class="c v"></i><i class="c"></i><i class="c"></i><i class="c"></i><i class="c v h"></i><svg><use href="#view"/></svg>Sud - Idraulica</li>
      <li><i class="c v h"></i><svg><use href="#legend"/></svg>Legende</li>
      <li><i class="c v h"></i><svg><use href="#sched"/></svg>Abachi/Quantità (tutto)</li>
      <li><i class="c v h"></i><svg><use href="#sheets"/></svg>Tavole (tutto)</li>
      <li><i class="c t">+</i><svg><use href="#fam"/></svg>Famiglie</li>
      <li><i class="c t">+</i><svg><use href="#grp"/></svg>Gruppi</li>
      <li><i class="c t">+</i><svg><use href="#chain"/></svg>Collegamenti Revit</li>
    </ul>
  </aside>
</main>

<section class="status">
  <span class="status-text">Collegamenti RVT : Modello di Revit collegato : BAGNO ARC.rvt : 2 : posizione &lt;Non condivisc</span>
  <svg><use href="#share"/></svg><select aria-label="Workset"><option></option></select><svg><use href="#filteredit"/></svg><span class="zero">:0</span><svg><use href="#opts"/></svg><svg class="so"><use href="#dopt"/></svg><select class="muted" aria-label="Opzione"><option>Modello principale</option></select>
  <div class="status-right"><svg><use href="#s1"/></svg><svg><use href="#s2"/></svg><svg><use href="#s3"/></svg><svg><use href="#s4"/></svg><svg><use href="#s5"/></svg><svg><use href="#s6"/></svg><svg><use href="#s7"/></svg></div><span class="sel-count">:1</span>
</section>

<footer class="taskbar">
  <div class="weather"><svg class="i24" viewBox="0 0 24 24"><circle cx="11" cy="14" r="8" fill="#f2a53b" stroke="none"/><path d="M2 10a4 4 0 0 1 7-3 3 3 0 0 1 0 5H3M11 21q0-4 4-4 5-1 6 4z" fill="#d6e5fa" stroke="none"/><circle cx="17" cy="7" r="6.500" fill="#f19baa" stroke="none"/><text x="17" y="10" class="badge-number">1</text></svg><div>29°C<br><span>Parzial. sereno</span></div></div>
  <button class="ib" aria-label="Start"><svg class="i20"><use href="#win"/></svg></button>
  <div class="search"><svg class="i14"><use href="#mag"/></svg><input type="text" value="Cerca" aria-label="Cerca"><svg class="i18"><use href="#bing"/></svg></div>
  <div class="apps"><button class="app"><svg><use href="#task"/></svg></button><button class="app"><svg><use href="#teams"/></svg></button><button class="app run"><svg><use href="#folder"/></svg></button><button class="app"><svg><use href="#edge"/></svg></button><button class="app"><svg><use href="#store"/></svg></button><button class="app"><svg class="askicon"><use href="#ask"/></svg></button><button class="app"><svg><use href="#tapp"/></svg></button><button class="app run"><svg><use href="#chrome"/></svg></button><button class="app"><svg><use href="#snip"/></svg></button><button class="app run cur"><span class="logo">R</span></button><button class="app run"><svg><use href="#round"/></svg></button></div>
  <div class="tray"><svg class="i14"><use href="#up"/></svg><svg class="i14"><use href="#cloud"/></svg><svg class="i14"><use href="#mic"/></svg><span class="trio"><svg class="i12"><use href="#wifi"/></svg><svg class="i12"><use href="#vol"/></svg><svg class="i14"><use href="#bat"/></svg></span><time>17:52<br>24/09/2023</time><span class="count">6</span></div>
</footer>
</body>
</html>
```

FILE: styles.css
```
:root { --ui: Roboto, "Open Sans", sans-serif; --ink: #484848; --line: #c9c9c9; --green: #e2eed6; }
* { box-sizing: border-box; }
body { margin: 0; height: 100vh; display: flex; flex-direction: column; overflow: hidden; font: 10px/13px var(--ui); color: var(--ink); background: #c9cacb; }
button { border: 0; padding: 0; background: none; font: inherit; color: inherit; }
svg { fill: none; stroke: #5c5c5c; stroke-width: 1; flex: none; display: block; }
i { font-style: normal; }
.sprite { position: absolute; width: 0; height: 0; }
.ib { display: flex; align-items: center; justify-content: center; }
.i8 { width: 8px; height: 8px; }
.i12 { width: 12px; height: 12px; }
.i14 { width: 14px; height: 14px; }
.i16 { width: 16px; height: 16px; }
.i18 { width: 18px; height: 18px; }
.i20 { width: 20px; height: 20px; }
.i24 { width: 24px; height: 24px; }
.i26 { width: 26px; height: 26px; }
.i28 { width: 28px; height: 26px; }
.tri { flex: none; display: inline-block; border: 2px solid transparent; border-top-color: #333; border-bottom: 0; width: 4px; height: 2px; place-self: center; }
.tri.wide { border-width: 3px 3px 0; width: 6px; height: 3px; }
.tri-left { width: 4px; height: 6px; border: 3px solid transparent; border-right: 4px solid #444; border-left: 0; }
.logo { width: 17px; height: 18px; background: #2272ea; border-left: 3px solid #1747b5; border-bottom: 3px solid #1747b5; color: #fff; font-size: 11px; line-height: 15px; font-weight: bold; text-align: center; }

.titlebar { display: flex; height: 24px; flex: none; align-items: flex-start; }
.title-left { flex: 0 0 44%; display: flex; gap: 4px; padding: 2px 0 0 2px; align-items: center; }
.title-left .ib { width: 16px; }
.title { flex: 1; margin: 2px 0 0; font: 10px/14px var(--ui); text-align: center; white-space: nowrap; }
.title-right { flex: 0 0 300px; height: 22px; display: flex; align-items: center; padding-left: 3px; gap: 4px; }
.title-right > .i16 { margin-left: 2px; width: 15px; height: 15px; }
.title-right .user-name { width: 66px; padding-left: 2px; }
.title-right .help { margin-left: 10px; }
.title-right > .tri { margin: 0 2px; }
.window-buttons { margin-left: auto; display: flex; gap: 10px; padding-right: 4px; }

.tabs { height: 17px; flex: none; display: flex; align-items: stretch; gap: 16px; white-space: nowrap; }
.tabs button { padding-top: 1px; }
.tabs .file { width: 37px; margin-left: 1px; margin-right: -7px; background: #2580b3; color: #fff; }
.tabs svg { place-self: center; margin-left: -14px; }
.tabs .tri { margin-left: -12px; }
.tab-dots { width: 8px; height: 4px; place-self: center; margin-left: -4px; border-left: 2px solid #eee; border-right: 2px solid #eee; }

.ribbon { height: 80px; flex: none; display: flex; background: #f1f1f1; overflow: hidden; }
.panel { flex: none; display: flex; flex-direction: column; }
.body { height: 66px; display: flex; justify-content: center; }
.label { height: 14px; text-align: center; display: flex; align-items: center; justify-content: center; gap: 6px; }
.big { display: flex; flex-direction: column; align-items: center; gap: 3px; padding-top: 6px; }
.big span { white-space: nowrap; line-height: 13px; text-align: center; }
.on { height: 60px; margin-top: 3px; background: #b6d8f2; border: 1px solid #4a90c4; padding-top: 2px; }
.big.off { color: #bbb; width: 40px; padding-top: 5px; }
.p-select { width: 64px; }
.p-select .on { width: 44px; }
.cursor { width: 18px; height: 26px; }
.p-props { width: 50px; }
.stack { flex-direction: column; align-items: center; justify-content: flex-start; gap: 3px; padding-top: 4px; }
.onbox { width: 32px; height: 29px; background: #b6d8f2; border: 1px solid #4a90c4; }
.p-clip { width: 76px; }
.p-clip .body { padding-left: 5px; justify-content: flex-start; gap: 7px; }
.grid { display: grid; grid-auto-rows: 21px; padding-top: 1px; place-items: center; align-content: start; }
.grid svg { width: 14px; height: 14px; }
.g1 { grid-template-columns: 14px; }
.p-geo { width: 85px; }
.g5 { grid-template-columns: 16px 14px 18px 24px 8px; }
.p-geo .body { justify-content: flex-start; }
.p-ctrl { width: 42px; }
.p-ctrl .on { width: 32px; }
.p-mod { width: 203px; }
.lgrid { display: grid; grid-auto-rows: 30px; padding-top: 3px; place-items: center; align-content: start; }
.lgrid svg { width: 24px; height: 24px; }
.l4 { grid-template-columns: repeat(4, 33px); }
.g3 { grid-template-columns: repeat(3, 21px); }
.p-view { width: 55px; }
.gv { grid-template-columns: 22px 8px 22px; }
.p-meas { width: 45px; }
.lm { grid-template-columns: 30px 14px; }
.p-crea { width: 70px; }
.l2 { grid-template-columns: 33px 33px; }
.l2 svg { width: 26px; }
.p-fab { width: 95px; }
.p-mod2 { width: 185px; }
.p-mod2 .body { justify-content: space-between; padding: 0 5px 0 4px; }
.ctx .label { background: var(--green); }
.ctx .big { padding-top: 5px; }
.ctx2 { width: 50px; background: var(--green); border-left: 1px solid #cdd8c2; }
.ctx2 .big { padding-top: 5px; }
.ribbon-rest { flex: 1; background: var(--green); border-left: 1px solid #d4dfc9; }

.qat { height: 21px; flex: none; display: flex; align-items: center; background: #c8c8ca; padding-left: 3px; }
.qat svg { width: 14px; height: 14px; margin: 0 3px; }
.qat .tri { margin: 0 3px; }
.qat .dim { opacity: .5; }
.sel { width: 22px; height: 19px; display: flex; align-items: center; justify-content: center; background: #b6d8f2; border: 1px solid #4a90c4; }
.sel.first { margin: 0 3px 0 6px; }
.letter { width: 20px; text-align: center; font-size: 14px; color: #444; }
.qat .skip { margin-left: 9px; }
.qat .after { margin-left: 7px; }
.qat .more, .more { width: 10px; height: 10px; }

.options { height: 23px; flex: none; display: flex; align-items: center; background: var(--green); padding-bottom: 1px; }
.mode { width: 122px; padding-left: 7px; color: #c0cbb6; border-right: 1px solid #d2dec6; }
.options label { width: 60px; text-align: right; padding-right: 3px; color: #222; }
select { appearance: none; font: inherit; color: #333; height: 17px; padding: 0 5px; border: 1px solid #fff; border-radius: 0; background: #fff url("data:image/svg+xml,%3Csvg xmlns='http://www.w3.org/2000/svg' width='8' height='6'%3E%3Cpath d='M1 1l3 3 3-3' fill='none' stroke='%23999'/%3E%3C/svg%3E") no-repeat right 2px center; }
#diam { width: 80px; height: 19px; border-color: #c4cdbc; }

.work { flex: 1; min-height: 0; display: flex; background: #eee; }
.dock-head { height: 17px; flex: none; display: flex; align-items: center; justify-content: space-between; padding: 0 2px; background: #f0f1f1; }
.props { flex: 0 0 293px; display: flex; flex-direction: column; background: #f0f0f0; }
.type { height: 59px; flex: none; display: flex; align-items: center; padding: 0 5px 0 3px; }
.thumb { width: 54px; height: 54px; background: #fff; stroke: none; }
.type-name { flex: 1; padding-left: 5px; }
.filter { height: 18px; flex: none; display: flex; align-items: center; justify-content: space-between; padding: 0 7px 0 2px; }
.filter select { width: 204px; padding: 0 1px; }
.edit-type { display: flex; align-items: center; gap: 2px; color: #333; }
.scroll { flex: 1; min-height: 0; overflow: hidden; display: flex; align-items: stretch; }
table { align-self: flex-start; width: 277px; table-layout: fixed; border-collapse: collapse; background: #fff; }
.c1 { width: 134px; }
.c3 { width: 10px; }
tr { height: 16px; }
th, td { height: 16px; padding: 0 0 0 1px; border: solid var(--line); border-width: 0 1px 1px 0; font-weight: normal; text-align: left; line-height: 15px; white-space: nowrap; overflow: hidden; }
th { padding-left: 8px; }
.sec > * { background: #dcdcdc; border-color: #dcdcdc; }
.sec th { padding-left: 2px; color: #333; }
.sec td { padding: 0; vertical-align: top; }
.ro { color: #8d8d8d; }
.hi { color: #222; }
td.edit { outline: 1px solid #555; outline-offset: -1px; }
.track { flex: 1; padding: 16px 6px 0 5px; }
.thumb-v { height: 170px; width: 5px; background: #868686; }
.props-foot { flex: 0 0 23px; display: flex; justify-content: space-between; align-items: flex-start; padding: 1px 4px 0 2px; }
.props-foot a { color: #2e74ad; line-height: 15px; }
.props-foot button { width: 55px; height: 17px; margin-top: 1px; background: #f6f6f6; color: #999; }

.center { flex: 1; min-width: 0; display: flex; flex-direction: column; margin-left: 2px; border-left: 1px solid #ddd; }
.doc-tabs { height: 18px; flex: none; display: flex; background: #c9cacb; border-bottom: 1px solid #fff; }
.doc { width: 106px; display: flex; align-items: center; gap: 6px; padding-left: 2px; }
.doc span { flex: 1; text-align: left; }
.doc.active { background: #fff; color: #333; font-weight: bold; padding-right: 3px; }
.doc-tabs > .more { margin-left: auto; margin-right: 3px; align-self: center; }
.view-row { flex: 1; min-height: 0; display: flex; background: #fff; }
.canvas { flex: 1; min-width: 0; position: relative; background: #fff; }
.drawing { width: 100%; height: 100%; }
.ink { stroke: #555; }
.faint { stroke: #c9c9c9; }
.pipe { fill: #829fde; stroke: #4465ad; }
.pipe-line { stroke: #5878c2; }
.fitting-fill { fill: #fff; stroke: none; }
.fitting { stroke: #84d890; }
.dims text { font: 10px "Liberation Sans", sans-serif; fill: #666; stroke: none; }
.dims .deep { fill: #46407c; }
.dims path { stroke: #7581a5; }
.vcube { stroke: #ddd; }
.vcube .edge { stroke: #999; }
.vcube .ring { stroke: #f5f5f5; stroke-width: 6; }
.vcube text { font: 6px "Liberation Sans", sans-serif; fill: #888; stroke: none; }
.vcube .tiny { font-size: 5px; }
.halo { stroke: #e9f22e; stroke-width: 3; }
.navbar { position: absolute; top: 112px; right: 1px; width: 24px; height: 79px; border: 1px solid #aaa; border-radius: 3px; background: #f5f5f5; display: flex; flex-direction: column; align-items: center; justify-content: space-between; }
.navbar .i8 { align-self: flex-end; }
.navbar hr { width: 18px; margin: 0; border: 0; border-top: 1px solid #ccc; }
.vscroll { width: 15px; background: #efefef; display: flex; align-items: center; justify-content: center; }
.vscroll::before { content: ""; width: 4px; height: 15px; background: #888; }
.view-bar { height: 18px; flex: none; display: flex; align-items: center; background: #efefef; padding: 0 0 2px 18px; color: #222; }
.scale { width: 43px; text-align: left; }
.vicons { width: 231px; display: flex; justify-content: space-between; }
.vicons svg { width: 14px; height: 14px; }
.hscroll { flex: 1; display: flex; justify-content: center; }
.hscroll span { width: 14px; height: 4px; background: #888; }

.browser { flex: 0 0 309px; display: flex; flex-direction: column; background: #fff; border-left: 1px solid #aaa; margin-left: 1px; }
.browser .dock-head { background: #ebeeee; }
.tree { list-style: none; margin: 0; padding: 0; height: 308px; display: grid; grid-auto-rows: 1fr; }
.tree li { display: flex; align-items: center; white-space: nowrap; min-height: 0; line-height: 13px; }
.tree svg { width: 14px; height: 14px; margin-right: 4px; }
.tree .f svg { margin-left: 2px; }
.tree b { background: #e8e8e8; color: #222; }
.c { flex: none; width: 17px; height: 100%; position: relative; }
.c.v { background: linear-gradient(#d5d5d5, #d5d5d5) 8px 0 / 1px 100% no-repeat; }
.c.h::after { content: ""; position: absolute; left: 9px; right: 1px; top: 50%; border-top: 1px solid #ddd; }
.c.t { height: 9px; width: 9px; margin: 0 4px; border: 1px solid #aaa; background: #fff; color: #555; line-height: 7px; text-align: center; font-size: 9px; }
.tree .n .t { margin: 0 10px 0 4px; }

.status { height: 21px; flex: none; display: flex; align-items: center; background: #cbcbcb; white-space: nowrap; padding-bottom: 1px; }
.status svg { width: 14px; height: 14px; }
.status-text { width: 419px; padding-left: 1px; overflow: hidden; color: #333; }
.status select { width: 171px; height: 16px; margin-left: 5px; padding: 0 2px; }
.status select + svg { margin-left: 2px; }
.status .zero { width: 27px; padding-left: 4px; }
.status .so { margin-left: 6px; }
.status .muted { color: #888; }
.status-right { margin-left: auto; width: 134px; display: flex; justify-content: space-between; }
.sel-count { width: 59px; }

.taskbar { height: 39px; flex: none; display: flex; align-items: center; background: #12244a; color: #e3e8f2; }
.weather { width: 334px; display: flex; align-items: center; gap: 4px; padding-left: 15px; }
.badge-number { font: 9px var(--ui); fill: #55202b; stroke: none; text-anchor: middle; }
.weather span { color: #b8c1d4; }
.search { width: 183px; height: 27px; margin-left: 11px; display: flex; align-items: center; gap: 8px; padding: 0 4px 0 9px; border-radius: 14px; background: #33415f; }
.search input { flex: 1; min-width: 0; border: 0; padding: 0; background: none; color: #d6dce8; font: 11px/16px var(--ui); }
.apps { width: 402px; margin-left: 3px; display: flex; }
.app { flex: 1 1 0; height: 35px; display: flex; align-items: center; justify-content: center; position: relative; }
.app svg { width: 20px; height: 20px; }
.app .askicon { width: 24px; height: 24px; }
.run::after { content: ""; position: absolute; bottom: 2px; width: 5px; height: 2px; border-radius: 1px; background: #9ba5b8; }
.cur { background: #1b2d54; border-radius: 3px; }
.cur::after { width: 13px; background: #6bc1f5; }
.tray { margin-left: auto; display: flex; align-items: center; gap: 12px; padding-right: 17px; }
.trio { display: flex; align-items: center; gap: 7px; margin-left: 1px; }
.tray time { text-align: right; width: 60px; margin-left: -6px; color: #fff; }
.count { width: 14px; height: 14px; margin-left: -7px; border-radius: 50%; background: #55bbef; color: #16325e; text-align: center; line-height: 14px; }
```
